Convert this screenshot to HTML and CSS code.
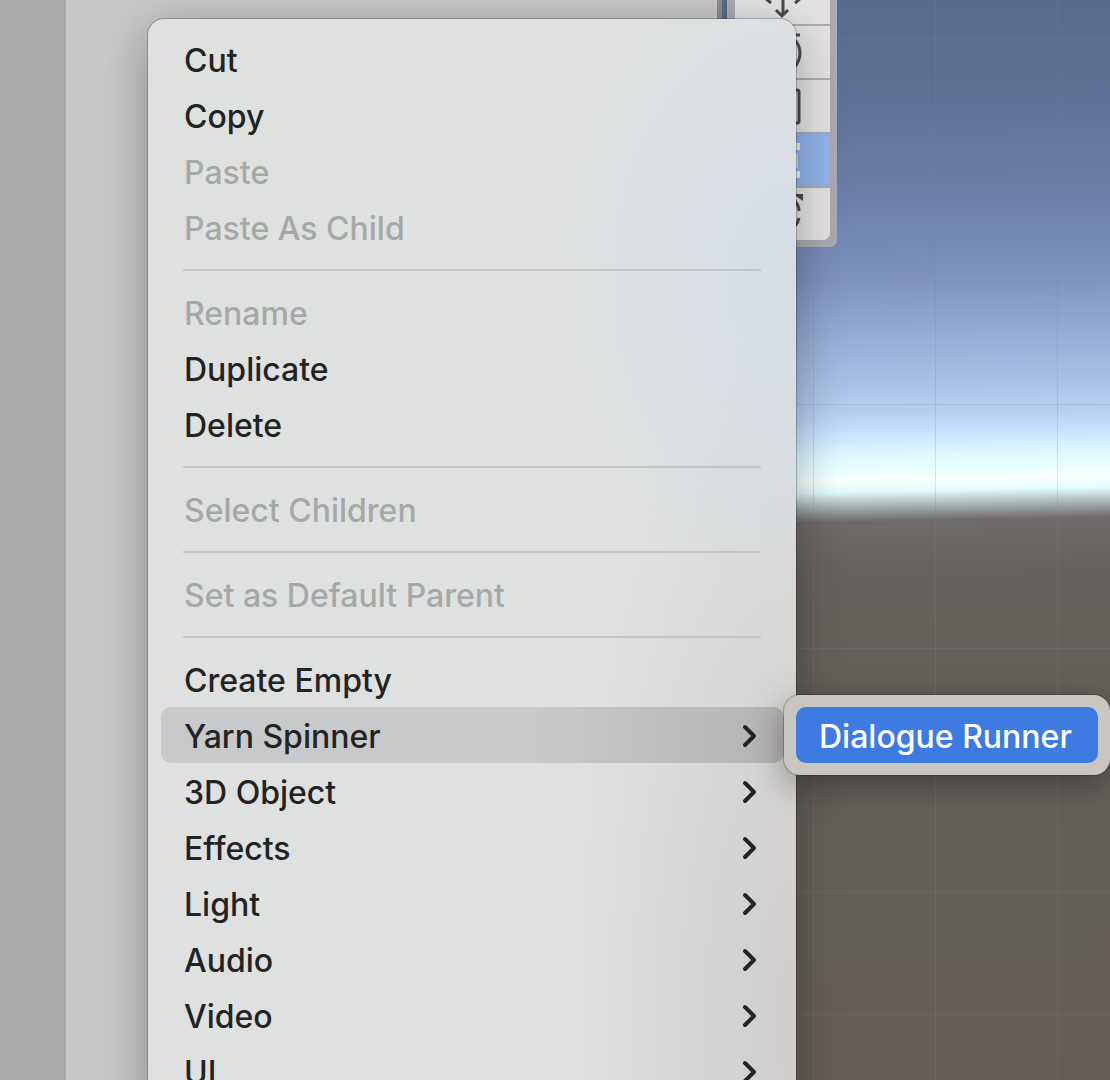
FILE: index.html
```html
<!DOCTYPE html>
<html lang="en">
<head>
<meta charset="utf-8">
<title>Hierarchy</title>
<link rel="stylesheet" href="styles.css">
</head>
<body>
<main class="editor">
  <div class="gutter"></div>
  <div class="panel"></div>
  <section class="scene" aria-label="Scene">
    <div class="toolbar" role="toolbar" aria-label="Tools">
      <button class="tool" aria-label="Move"><svg viewBox="0 0 44 44"><path d="M22 4v36M4 22h36M15 34l6 6 6-6M15 10l6-6 6 6M10 16l-6 6 6 5M34 16l6 6-6 5"/></svg></button>
      <button class="tool" aria-label="Rotate"><svg viewBox="0 0 44 44"><path d="M33 9q6 6 6 14t-6 15M31 5h8M11 35q-7-6-7-14t7-15"/></svg></button>
      <button class="tool" aria-label="Scale"><svg viewBox="0 0 44 44"><rect x="5" y="6" width="33" height="33" rx="2"/></svg></button>
      <button class="tool selected" aria-label="Rect"><svg viewBox="0 0 44 44"><path class="solid" d="M4 5h7v7H4zM32 5h7v7h-7zM4 33h7v7H4zM32 33h7v7h-7z"/><path d="M7 15v15M35 15v15M14 8h16M14 37h16"/></svg></button>
      <button class="tool" aria-label="Transform"><svg viewBox="0 0 44 44"><path class="solid" d="M32 2h10v7z"/><path d="M33 8q5 5 5 11M38 26q-1 5-4 8M10 8q-6 12 0 24"/></svg></button>
    </div>
  </section>
</main>

<div class="menu" role="menu">
  <button class="item" role="menuitem">Cut</button>
  <button class="item" role="menuitem">Copy</button>
  <button class="item" role="menuitem" disabled>Paste</button>
  <button class="item" role="menuitem" disabled>Paste As Child</button>
  <hr class="rule">
  <button class="item" role="menuitem" disabled>Rename</button>
  <button class="item" role="menuitem">Duplicate</button>
  <button class="item" role="menuitem">Delete</button>
  <hr class="rule">
  <button class="item" role="menuitem" disabled>Select Children</button>
  <hr class="rule">
  <button class="item" role="menuitem" disabled>Set as Default Parent</button>
  <hr class="rule">
  <button class="item" role="menuitem">Create Empty</button>
  <div class="parent">
    <button class="item open" role="menuitem">Yarn Spinner<svg class="chevron" viewBox="0 0 16 26"><path d="M3 3l9 9-9 9"/></svg></button>
    <div class="submenu" role="menu">
      <button class="item active" role="menuitem">Dialogue Runner</button>
    </div>
  </div>
  <button class="item" role="menuitem">3D Object<svg class="chevron" viewBox="0 0 16 26"><path d="M3 3l9 9-9 9"/></svg></button>
  <button class="item" role="menuitem">Effects<svg class="chevron" viewBox="0 0 16 26"><path d="M3 3l9 9-9 9"/></svg></button>
  <button class="item" role="menuitem">Light<svg class="chevron" viewBox="0 0 16 26"><path d="M3 3l9 9-9 9"/></svg></button>
  <button class="item" role="menuitem">Audio<svg class="chevron" viewBox="0 0 16 26"><path d="M3 3l9 9-9 9"/></svg></button>
  <button class="item" role="menuitem">Video<svg class="chevron" viewBox="0 0 16 26"><path d="M3 3l9 9-9 9"/></svg></button>
  <button class="item" role="menuitem">UI<svg class="chevron" viewBox="0 0 16 26"><path d="M3 3l9 9-9 9"/></svg></button>
</div>
</body>
</html>
```
FILE: styles.css
```css
* { box-sizing: border-box; }

body {
  margin: 0;
  height: 100vh;
  overflow: hidden;
  position: relative;
  font-family: Inter, "Liberation Sans", sans-serif;
}

button {
  border: 0;
  margin: 0;
  padding: 0;
  background: none;
  font: inherit;
  color: inherit;
  text-align: left;
}

.editor { display: flex; height: 100%; }
.gutter { flex: 0 0 66px; background: #a9a9a9; }
.panel { flex: 0 0 656px; background: #c8c8c8; border-right: 5px solid #8c8c8c; }

.scene {
  flex: 1;
  min-width: 0;
  padding-left: 5px;
  background:
    linear-gradient(90deg, rgba(125, 130, 140, .22) 1px, transparent 1px) 91px 0 / 122px 122px,
    linear-gradient(rgba(125, 130, 140, .22) 1px, transparent 1px) 0 38px / 122px 122px,
    linear-gradient(179deg, #566a8c 0, #5f7299 110px, #6d81ac 210px, #7d92c0 280px, #a4bce4 375px, #b5cef0 415px, #c9e4fd 438px, #dff9ff 458px, #e6ffff 470px, #fbffff 483px, #e2fbfc 494px, #a9b5b4 508px, #6e6a69 524px, #68625e 575px, #66605b 700px, #655f58 100%);
}

.toolbar {
  display: flex;
  flex-direction: column;
  gap: 2px;
  width: 110px;
  margin-top: -28px;
  padding: 0 7px 7px 8px;
  background: #a9abb0;
  border-radius: 0 0 7px 7px;
}
.tool {
  display: flex;
  align-items: center;
  justify-content: center;
  height: 52px;
  background: #e3e3e3;
  color: #4a4a4a;
}
.tool:last-child { border-radius: 0 0 7px 7px; }
.tool.selected { background: #92b4ec; color: #f0f0f0; }
.tool svg {
  width: 44px;
  height: 44px;
  fill: none;
  stroke: currentColor;
  stroke-width: 3;
}
.tool .solid { fill: currentColor; stroke: none; }

.menu {
  position: absolute;
  top: 19px;
  left: 148px;
  width: 648px;
  padding: 12px 12px 12px 13px;
  border-radius: 16px;
  background:
    radial-gradient(ellipse 240px 330px at 100% 260px, rgba(211, 220, 232, .85), transparent),
    radial-gradient(ellipse 230px 700px at 100% 1000px, rgba(206, 204, 202, .95), transparent),
    #dfe1e0;
  box-shadow: 0 0 0 1px rgba(0, 0, 0, .22), 0 12px 50px rgba(0, 0, 0, .32);
  color: #232323;
  font-size: 32px;
  font-weight: 500;
}
.item {
  display: flex;
  align-items: center;
  justify-content: space-between;
  width: 100%;
  height: 56px;
  padding: 4px 26px 0 23px;
  border-radius: 10px;
  line-height: 40px;
  white-space: nowrap;
}
.item:disabled { color: #a6a8a7; }
.item.open { background: linear-gradient(90deg, #c8c9ca 60%, #b5b4b3); }

.rule {
  height: 2px;
  margin: 14px 23px 13px 22px;
  border: 0;
  background: #c5c7c7;
}
.chevron {
  width: 16px;
  height: 26px;
  fill: none;
  stroke: currentColor;
  stroke-width: 4;
  stroke-linecap: round;
  stroke-linejoin: round;
}

.parent { position: relative; }
.submenu {
  position: absolute;
  top: -12px;
  left: 100%;
  padding: 12px;
  border-radius: 16px;
  background: #c9c5c1;
  box-shadow: 0 0 0 1px rgba(0, 0, 0, .22), 0 10px 36px rgba(0, 0, 0, .35);
}
.item.active { background: #3d7ae2; color: #fff; }
```
